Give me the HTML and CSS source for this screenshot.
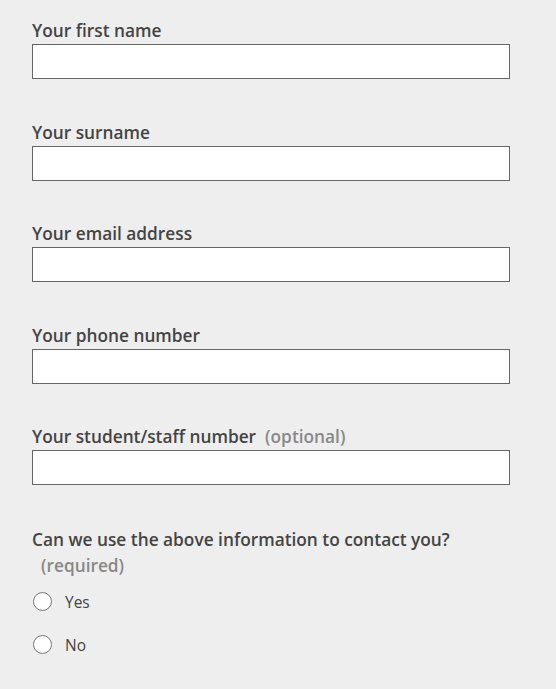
FILE: index.html
```html
<!DOCTYPE html>
<html lang="en">
<head>
<meta charset="utf-8">
<title>Contact form</title>
<link rel="stylesheet" href="styles.css">
</head>
<body>
<form class="form">
  <div class="field">
    <label class="label" for="first">Your first name</label>
    <input class="input" id="first" type="text">
  </div>
  <div class="field">
    <label class="label" for="surname">Your surname</label>
    <input class="input" id="surname" type="text">
  </div>
  <div class="field">
    <label class="label" for="email">Your email address</label>
    <input class="input" id="email" type="text">
  </div>
  <div class="field">
    <label class="label" for="phone">Your phone number</label>
    <input class="input" id="phone" type="text">
  </div>
  <div class="field">
    <label class="label" for="staff">Your student/staff number<span class="hint">(optional)</span></label>
    <input class="input" id="staff" type="text">
  </div>
  <fieldset class="group">
    <legend class="question">Can we use the above information to contact you?<span class="hint">(required)</span></legend>
    <label class="option"><span class="radio"></span><span class="option-text">Yes</span></label>
    <label class="option"><span class="radio"></span><span class="option-text">No</span></label>
  </fieldset>
</form>
</body>
</html>
```

FILE: styles.css
```css
html, body {
  margin: 0;
  padding: 0;
  background: #eeeeee;
}
body {
  font-family: "Open Sans", "Liberation Sans", sans-serif;
  color: #444444;
}
.form {
  padding: 19px 0 0 32px;
  width: 478px;
}
.field {
  display: flex;
  flex-direction: column;
  gap: 1px;
  margin-bottom: 41.5px;
}
.label {
  font-size: 17.3px;
  font-weight: 600;
  line-height: 24px;
}
.hint {
  display: inline-block;
  margin-left: 9px;
  color: #888888;
}
.input {
  box-sizing: border-box;
  width: 478px;
  height: 35px;
  margin: 0;
  border: 1px solid #666666;
  background: #ffffff;
  border-radius: 0;
  padding: 0 8px;
}
.group {
  border: 0;
  margin: 0;
  padding: 0;
  width: 478px;
}
.question {
  padding: 0;
  font-size: 17.3px;
  font-weight: 600;
  line-height: 26px;
  margin-bottom: 13px;
}
.option {
  display: flex;
  align-items: center;
  gap: 13px;
  height: 20px;
  margin-bottom: 23px;
  font-size: 15.5px;
}
.radio {
  box-sizing: border-box;
  width: 19px;
  height: 19px;
  margin-left: 1px;
  border: 1.5px solid #777777;
  border-radius: 50%;
  background: #ffffff;
}
.option-text {
  line-height: 20px;
}
```
